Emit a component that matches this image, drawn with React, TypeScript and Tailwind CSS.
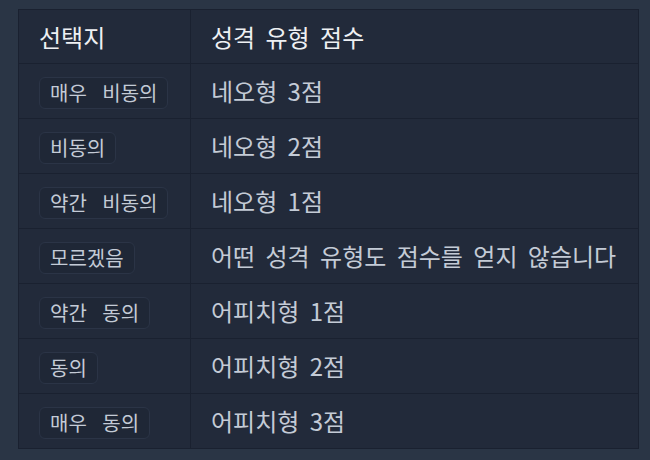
import React from 'react';

const rows: { choice: string; score: string }[] = [
  { choice: '매우 비동의', score: '네오형 3점' },
  { choice: '비동의', score: '네오형 2점' },
  { choice: '약간 비동의', score: '네오형 1점' },
  { choice: '모르겠음', score: '어떤 성격 유형도 점수를 얻지 않습니다' },
  { choice: '약간 동의', score: '어피치형 1점' },
  { choice: '동의', score: '어피치형 2점' },
  { choice: '매우 동의', score: '어피치형 3점' },
];

const App: React.FC = () => {
  return (
    <div
      className="w-[650px] h-[460px] bg-[#2a3545] pt-[9px] pl-[18px]"
      style={{ fontFamily: '"Noto Sans CJK KR", "Noto Sans", sans-serif' }}
    >
      <table className="w-[621px] border-collapse bg-[#222a3a] border border-[#1a2130] text-[24px] [word-spacing:5px]">
        <thead>
          <tr className="h-[54px]">
            <th className="w-[172px] border border-[#1a2130] px-5 text-left font-normal text-[#eef0f3]">선택지</th>
            <th className="border border-[#1a2130] px-5 text-left font-normal text-[#eef0f3]">성격 유형 점수</th>
          </tr>
        </thead>
        <tbody>
          {rows.map((r) => (
            <tr key={r.choice} className="h-[55px]">
              <td className="border border-[#1a2130] px-5">
                <span className="inline-block rounded-md border border-[#2b3446] bg-[#1f2736] px-[10px] py-[2px] text-[20px] leading-[26px] text-[#c4cbd6] [word-spacing:11px]">
                  {r.choice}
                </span>
              </td>
              <td className="border border-[#1a2130] px-5 text-[#c4cbd6]">{r.score}</td>
            </tr>
          ))}
        </tbody>
      </table>
    </div>
  );
};

export default App;
